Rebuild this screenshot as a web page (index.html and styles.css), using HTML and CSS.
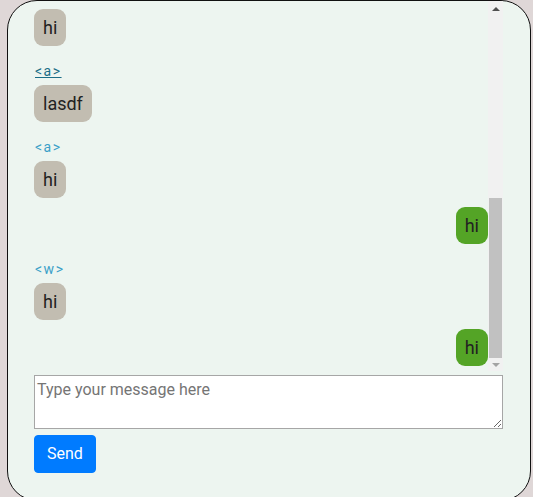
FILE: index.html
```html
<!DOCTYPE html>
<html lang="en">
<head>
<meta charset="utf-8">
<title>Chat</title>
<link rel="stylesheet" href="styles.css">
</head>
<body>
<div class="chat">
  <div class="history">
    <div class="messages">
      <div class="msg"><span class="label">&lt;a&gt;</span><div class="bubble">hi</div></div>
      <div class="msg mine"><div class="bubble">hello</div></div>
      <div class="msg"><span class="label">&lt;a&gt;</span><div class="bubble">hi</div></div>
      <div class="msg"><span class="label link">&lt;a&gt;</span><div class="bubble">lasdf</div></div>
      <div class="msg"><span class="label">&lt;a&gt;</span><div class="bubble">hi</div></div>
      <div class="msg mine"><div class="bubble">hi</div></div>
      <div class="msg"><span class="label">&lt;w&gt;</span><div class="bubble">hi</div></div>
      <div class="msg mine"><div class="bubble">hi</div></div>
    </div>
    <div class="scrollbar">
      <div class="sb-btn up"></div>
      <div class="sb-track"><div class="sb-thumb"></div></div>
      <div class="sb-btn down"></div>
    </div>
  </div>
  <form class="composer">
    <textarea class="input" rows="2" placeholder="Type your message here"></textarea>
    <button class="send" type="button">Send</button>
  </form>
</div>
</body>
</html>
```

FILE: styles.css
```css
html, body {
  margin: 0;
  padding: 0;
  overflow: hidden;
  background: #dfd7d7;
  font-family: Roboto, "Liberation Sans", sans-serif;
  color: #212529;
}

.chat {
  box-sizing: border-box;
  margin-left: 7px;
  width: 524px;
  height: 501px;
  border: 1px solid #111;
  border-radius: 30px;
  background: #edf5f0;
  padding: 0 27px 0 26px;
  overflow: hidden;
}

.history {
  display: flex;
  height: 370px;
}

.messages {
  flex: 1;
  display: flex;
  flex-direction: column;
  justify-content: flex-end;
  overflow: hidden;
  padding-bottom: 5px;
}

.msg {
  display: flex;
  flex-direction: column;
  align-items: flex-start;
  margin-top: 9px;
  flex-shrink: 0;
}

.msg.mine {
  align-items: flex-end;
}

.label {
  font-size: 14px;
  line-height: 18px;
  margin: 7px 0 5px 1px;
  color: #3aa0c8;
  letter-spacing: 1.5px;
}

.label.link {
  color: #1b6d87;
  text-decoration: underline;
}

.bubble {
  font-size: 18px;
  line-height: 25px;
  padding: 6px 9px;
  border-radius: 9px;
  background: #c2bdb1;
  color: #222;
}

.mine .bubble {
  background: #54a426;
}

.scrollbar {
  width: 15px;
  background: #f1f1f1;
  display: flex;
  flex-direction: column;
}

.sb-btn {
  display: flex;
  align-items: center;
  justify-content: center;
}

.sb-btn.up {
  height: 15px;
}

.sb-btn.down {
  height: 13px;
}

.sb-btn::before {
  content: "";
  width: 0;
  height: 0;
  border-left: 4px solid transparent;
  border-right: 4px solid transparent;
}

.sb-btn.up::before {
  border-bottom: 4px solid #505050;
}

.sb-btn.down::before {
  border-top: 4px solid #a3a3a3;
}

.sb-track {
  flex: 1;
  display: flex;
  flex-direction: column;
  justify-content: flex-end;
  padding: 0 1px;
}

.sb-thumb {
  height: 160px;
  background: #c1c1c1;
}

.composer {
  margin: 0;
}

.input {
  display: block;
  box-sizing: border-box;
  width: 100%;
  height: 54px;
  margin: 4px 0 0;
  padding: 2px;
  border: 1px solid #a6a6a6;
  background: #fff;
  font-family: Roboto, "Liberation Sans", sans-serif;
  font-size: 16px;
  line-height: 24px;
  color: #212529;
}

.input::placeholder {
  color: #757575;
}

.send {
  display: block;
  margin-top: 6px;
  padding: 6px 12px;
  border: 1px solid #007bff;
  border-radius: 4px;
  background: #007bff;
  color: #fff;
  font-family: Roboto, "Liberation Sans", sans-serif;
  font-size: 16px;
  line-height: 24px;
}
```
